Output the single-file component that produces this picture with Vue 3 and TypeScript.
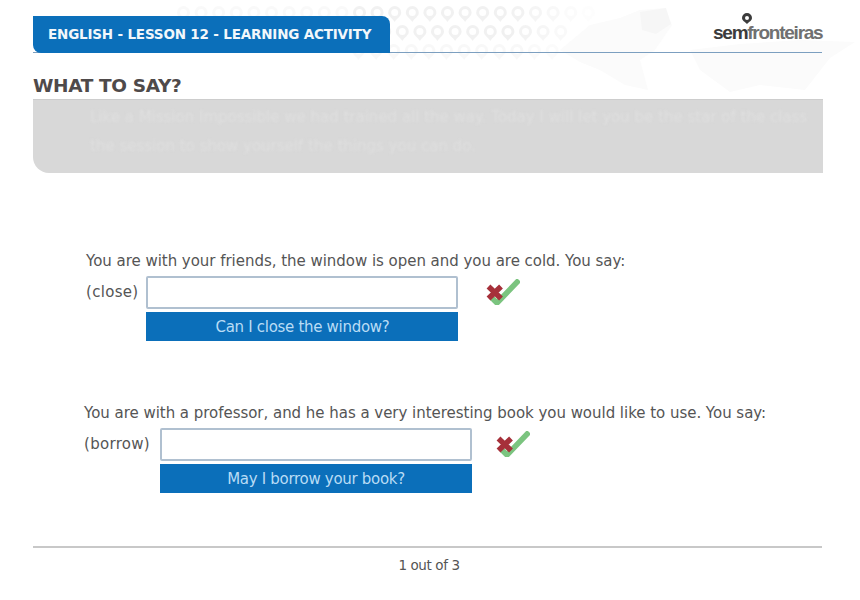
<template>
  <div class="page">
    <div class="backdrop" aria-hidden="true">
      <svg class="pins" width="860" height="100" viewBox="0 0 860 100">
        <template v-for="(row, r) in pinRows" :key="r">
          <path
            v-for="col in row.count"
            :key="col"
            :transform="`translate(${row.x + (col - 1) * 17.6} ${row.y})`"
            :opacity="pinOpacity(row.x + (col - 1) * 17.6) * row.strength"
            d="M6.500 0a6.500 6.500 0 0 1 6.500 6.500c0 4-4.500 6-6.500 9.500-2-3.500-6.500-5.500-6.500-9.500a6.500 6.500 0 0 1 6.500-6.500Zm0 3a3.500 3.500 0 1 0 0 7 3.500 3.500 0 0 0 0-7Z"
            fill="#f0f0f0"
            fill-rule="evenodd"
          />
        </template>
        <path
          d="M560 50 590 25 620 18 640 10 665 8 672 25 655 50 640 60 648 90 625 85 600 70 580 62Z"
          fill="#fbfbfb"
        />
        <path d="M640 12 666 8 671 24 656 34 642 30Z" fill="#f6f6f6" />
        <path
          d="M690 50 740 44 800 40 855 42 830 58 805 90 760 85 730 92 700 70Z"
          fill="#fbfbfb"
        />
      </svg>
    </div>

    <header class="top">
      <div class="tab">ENGLISH - LESSON 12 - LEARNING ACTIVITY</div>
      <div class="logo">
        <svg class="logo-pin" width="10" height="11" viewBox="0 0 10 11">
          <path
            d="M5 0a5 5 0 0 1 5 5c0 2.400-3 4-5 6-2-2-5-3.600-5-6a5 5 0 0 1 5-5Zm0 3a2 2 0 1 0 0 4 2 2 0 0 0 0-4Z"
            fill="#3c3c3c"
            fill-rule="evenodd"
          />
        </svg>
        <div class="logo-text">sem<span>fronteiras</span></div>
      </div>
    </header>

    <h1 class="title">WHAT TO SAY?</h1>

    <div class="intro">
      <p>Like a Mission Impossible we had trained all the way. Today I will let you be the star of the class</p>
      <p>the session to show yourself the things you can do.</p>
    </div>

    <section
      v-for="item in items"
      :key="item.word"
      class="item"
      :class="item.cls"
    >
      <p class="prompt">{{ item.prompt }}</p>
      <div class="answer">
        <label class="word">({{ item.word }})</label>
        <div class="fields">
          <input class="field" type="text" />
          <div class="solution">{{ item.solution }}</div>
        </div>
        <svg class="marks" width="34" height="26" viewBox="0 0 34 26">
          <path d="M6 19 11 24 33 1" fill="none" stroke="#7bc47f" stroke-width="5.500" />
          <path d="M2.500 7.500 15 19.500M15 7.500 2.500 19.500" fill="none" stroke="#a6303a" stroke-width="5.500" />
        </svg>
      </div>
    </section>

    <footer class="pager">1 out of 3</footer>
  </div>
</template>

<script setup lang="ts">
const items = [
  {
    cls: "first",
    prompt: "You are with your friends, the window is open and you are cold. You say:",
    word: "close",
    solution: "Can I close the window?",
  },
  {
    cls: "second",
    prompt: "You are with a professor, and he has a very interesting book you would like to use. You say:",
    word: "borrow",
    solution: "May I borrow your book?",
  },
];

const pinRows = [
  { x: 177, y: 6, count: 24, strength: 1 },
  { x: 343, y: 25, count: 13, strength: 1 },
  { x: 352, y: 44, count: 12, strength: 0.5 },
];

// the watermark fades out towards both ends
function pinOpacity(x: number) {
  if (x < 350) return 0.4;
  if (x > 500) return Math.max(0.15, 1 - (x - 500) / 90);
  return 0.9;
}
</script>

<style scoped>
.page {
  position: relative;
  width: 860px;
  height: 600px;
  padding: 16px 37px 0 33px;
  box-sizing: border-box;
  overflow: hidden;
  background: #fff;
  color: #555;
  font-family: "DejaVu Sans", sans-serif;
}

.backdrop {
  position: absolute;
  top: 0;
  left: 0;
  width: 860px;
  height: 100px;
}

.pins {
  display: block;
}

.top {
  position: relative;
  display: flex;
  justify-content: space-between;
  align-items: flex-end;
  height: 36px;
  margin-right: 1px;
  border-bottom: 1px solid #7c9fc0;
}

.tab {
  width: 357px;
  height: 37px;
  margin-bottom: -1px;
  padding-left: 15px;
  box-sizing: border-box;
  border-radius: 0 8px 0 8px;
  background: #0b6fba;
  color: #f2f7fb;
  font-size: 13.5px;
  font-weight: 700;
  line-height: 37px;
  letter-spacing: -0.18px;
  white-space: nowrap;
}

.logo {
  display: flex;
  flex-direction: column;
  align-items: flex-start;
  width: 110px;
  height: 40px;
  margin-right: -1px;
}

.logo-pin {
  margin: 1px 0 -2px 29px;
}

.logo-text {
  font-family: "Liberation Sans", sans-serif;
  font-size: 19px;
  font-weight: 700;
  line-height: 21px;
  letter-spacing: -1.25px;
  color: #3c3c3c;
  white-space: nowrap;
}

.logo-text span {
  color: #707070;
}

.title {
  position: relative;
  margin: 19px 0 0;
  height: 27px;
  color: #4f4a4a;
  font-size: 18.500px;
  font-weight: 700;
  line-height: 28px;
  letter-spacing: -0.35px;
}

.intro {
  position: relative;
  height: 74px;
  padding: 3px 0 0 57px;
  box-sizing: border-box;
  border-top: 1px solid #cdcdcd;
  border-radius: 0 0 0 16px;
  background: #d8d8d8;
  color: #dfdfdf;
  font-size: 15px;
  line-height: 29px;
  white-space: nowrap;
  overflow: hidden;
}

.intro p {
  margin: 0;
  filter: blur(0.8px);
}

.item {
  position: relative;
  font-size: 15px;
  letter-spacing: -0.03px;
}

.item.first {
  margin: 78px 0 0 53px;
}

.item.second {
  margin: 62px 0 0 51px;
}

.prompt {
  margin: 0 0 4px;
  line-height: 21px;
  white-space: nowrap;
}

.answer {
  display: flex;
  align-items: flex-start;
}

.word {
  line-height: 32px;
  letter-spacing: 0.3px;
}

.first .word {
  margin-right: 8px;
}

.second .word {
  margin-right: 10px;
}

.fields {
  width: 312px;
}

.field {
  display: block;
  width: 100%;
  height: 33px;
  padding: 0;
  box-sizing: border-box;
  border: 2px solid #b0c0d0;
  border-radius: 2px;
  background: #fff;
  outline: none;
}

.solution {
  height: 29px;
  margin-top: 3px;
  background: #0b6fba;
  color: #b9dcf5;
  font-size: 15px;
  line-height: 31px;
  letter-spacing: -0.3px;
  text-align: center;
}

.marks {
  margin: 3px 0 0 28px;
}

.second .marks {
  margin-left: 24px;
}

.pager {
  height: 30px;
  margin: 53px 1px 0 0;
  padding-left: 3px;
  border-top: 2px solid #c8c8c8;
  color: #555;
  font-size: 13.5px;
  line-height: 35px;
  letter-spacing: -0.4px;
  text-align: center;
}
</style>
